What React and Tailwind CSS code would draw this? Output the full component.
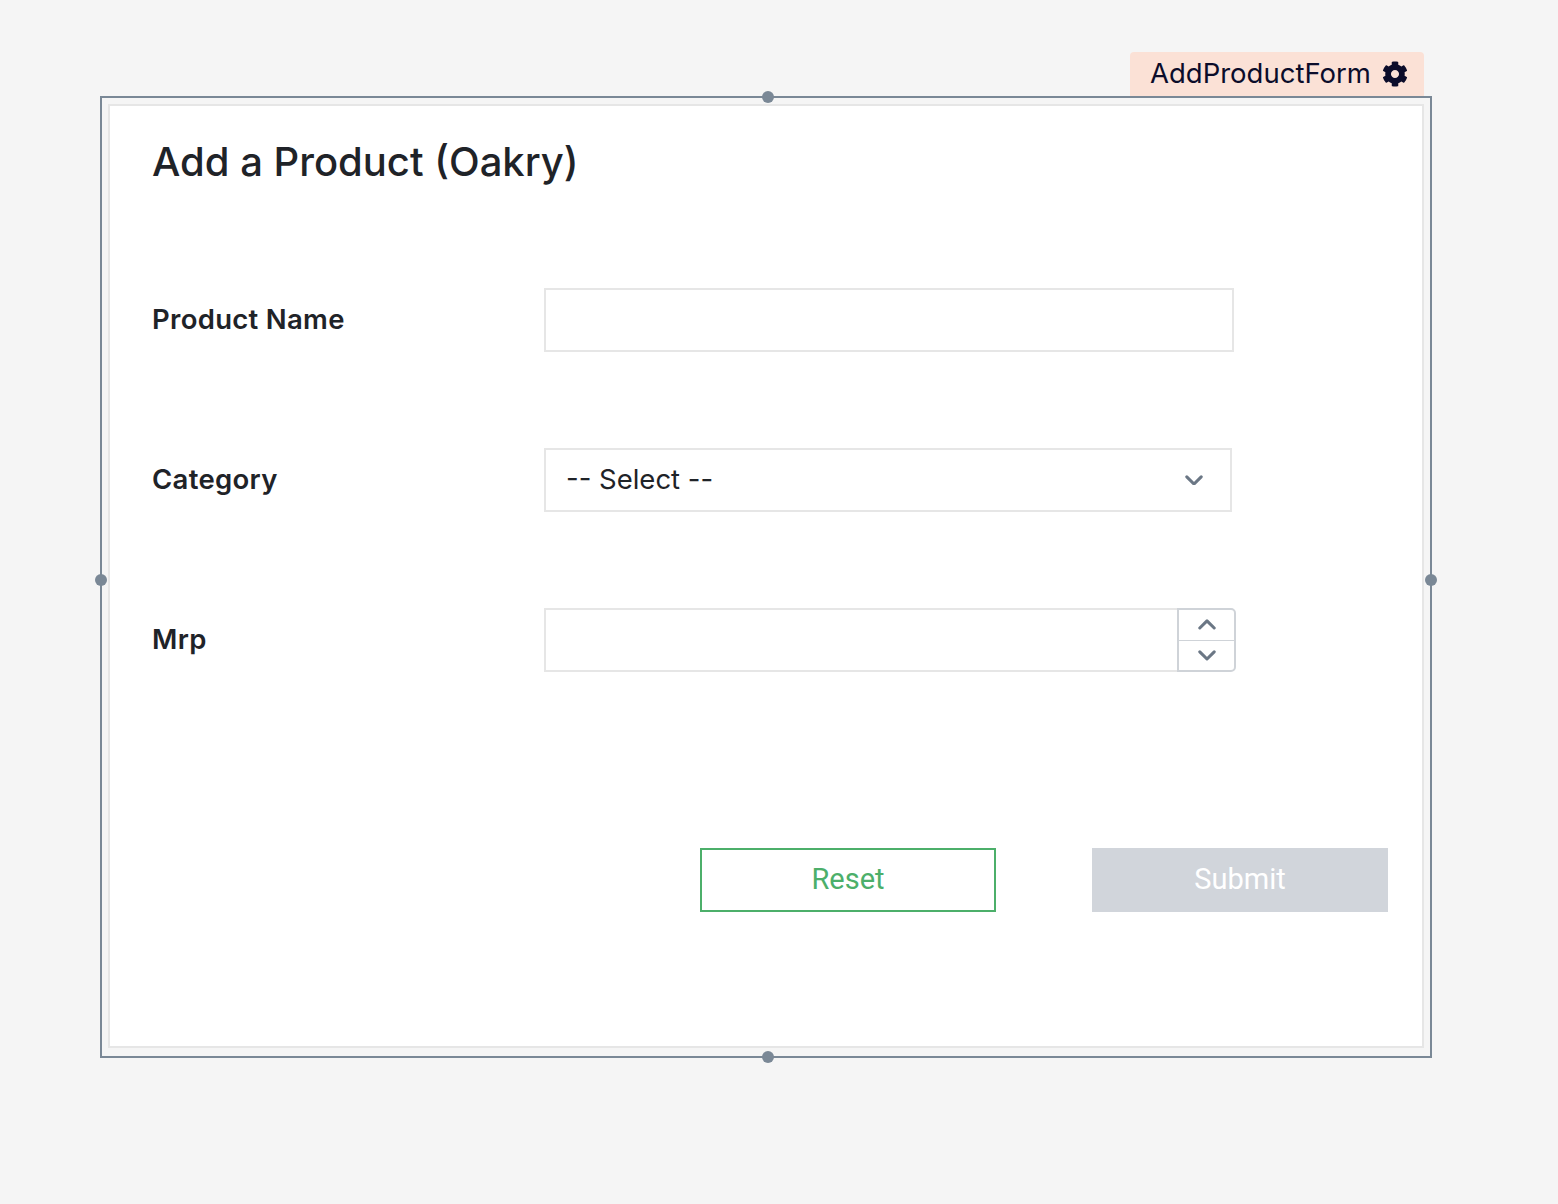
import React from "react";

function Gear() {
  return (
    <svg width="26" height="26" viewBox="0 0 512 512" fill="#0b0c2a">
      <path d="M487.4 315.7l-42.6-24.6c4.3-23.2 4.3-47 0-70.2l42.6-24.6c4.9-2.8 7.1-8.6 5.5-14-11.1-35.6-30-67.800-54.7-94.6-3.8-4.1-10-5.1-14.8-2.3L380.8 110c-17.9-15.4-38.5-27.3-60.8-35.1V25.8c0-5.6-3.9-10.5-9.4-11.7-36.7-8.2-74.3-7.8-109.2 0-5.5 1.2-9.4 6.1-9.4 11.7V75c-22.2 7.9-42.8 19.8-60.8 35.1L88.7 85.5c-4.9-2.8-11-1.9-14.8 2.3-24.7 26.7-43.6 58.9-54.7 94.6-1.7 5.4.6 11.2 5.5 14L67.3 221c-4.3 23.2-4.3 47 0 70.2l-42.6 24.6c-4.9 2.8-7.1 8.6-5.5 14 11.1 35.6 30 67.8 54.7 94.6 3.8 4.1 10 5.1 14.8 2.3l42.6-24.6c17.9 15.4 38.5 27.3 60.8 35.1v49.2c0 5.6 3.9 10.5 9.4 11.7 36.7 8.2 74.3 7.8 109.2 0 5.5-1.2 9.4-6.1 9.4-11.7v-49.2c22.2-7.9 42.8-19.8 60.8-35.1l42.6 24.6c4.9 2.8 11 1.9 14.8-2.3 24.7-26.7 43.6-58.9 54.7-94.6 1.5-5.5-.7-11.3-5.6-14.1zM256 336c-44.1 0-80-35.9-80-80s35.9-80 80-80 80 35.9 80 80-35.9 80-80 80z" />
    </svg>
  );
}

function Chevron({ up = false, w = 18 }) {
  return (
    <svg width={w} height={w * 0.6} viewBox="0 0 20 12" fill="none" stroke="#6b7785" strokeWidth="3.4" strokeLinecap="round" strokeLinejoin="round">
      {up ? <path d="M2 10 L10 2 L18 10" /> : <path d="M2 2 L10 10 L18 2" />}
    </svg>
  );
}

function Handle({ className }) {
  return <div className={"absolute w-[12px] h-[12px] rounded-full bg-[#7a8896] " + className} />;
}

export default function App() {
  return (
    <div
      className="min-h-screen bg-[#f5f5f5] pt-[96px] pl-[100px] pb-[146px]"
      style={{ fontFamily: "Inter, 'Noto Sans', sans-serif" }}
    >
      <div className="relative w-[1332px] h-[962px] border-2 border-[#7a8896] pt-[6px] pl-[6px] pr-[6px] pb-[8px]">
        <div className="absolute right-[6px] top-[-46px] h-[44px] w-[294px] bg-[#fbe1d6] rounded-t-[4px] flex items-center pl-[20px] gap-[11px] text-[27.5px] text-[#0b0c2a]">
          <span>AddProductForm</span>
          <Gear />
        </div>
        <Handle className="left-[660px] top-[-7px]" />
        <Handle className="left-[660px] bottom-[-7px]" />
        <Handle className="left-[-7px] top-[476px]" />
        <Handle className="right-[-7px] top-[476px]" />

        <div className="h-full border-2 border-[#e6e6e6] bg-white pl-[42px] pr-[34px] pt-[30px] flex flex-col">
          <h1 className="text-[40px] leading-[52px] font-medium text-[#1f2328]">
            Add a Product (Oakry)
          </h1>

          <div className="mt-[100px] flex flex-col gap-[96px]">
            <div className="flex items-center h-[64px]">
              <label className="w-[392px] text-[27.5px] font-semibold tracking-[0.3px] text-[#1f2328]">Product Name</label>
              <div className="w-[690px] h-[64px] border-2 border-[#e6e6e6] bg-white" />
            </div>

            <div className="flex items-center h-[64px]">
              <label className="w-[392px] text-[27.5px] font-semibold tracking-[0.3px] text-[#1f2328]">Category</label>
              <div className="w-[688px] h-[64px] border-2 border-[#e6e6e6] bg-white flex items-center justify-between pl-[20px] pr-[27px]">
                <span className="text-[27.5px] text-[#1f2328]">-- Select --</span>
                <Chevron />
              </div>
            </div>

            <div className="flex items-center h-[64px]">
              <label className="w-[392px] text-[27.5px] font-semibold tracking-[0.3px] text-[#1f2328]">Mrp</label>
              <div className="w-[692px] h-[64px] flex">
                <div className="flex-1 border-2 border-r-0 border-[#e6e6e6] bg-white" />
                <div className="w-[59px] h-[64px] border-2 border-[#cfd3d8] rounded-r-[5px] flex flex-col bg-white">
                  <div className="flex-1 flex items-center justify-center border-b border-[#cfd3d8]">
                    <Chevron up />
                  </div>
                  <div className="flex-1 flex items-center justify-center">
                    <Chevron />
                  </div>
                </div>
              </div>
            </div>
          </div>

          <div className="mt-[176px] flex justify-end gap-[96px]" style={{ fontFamily: "Roboto, 'Noto Sans', sans-serif" }}>
            <button className="w-[296px] h-[64px] border-2 border-[#4caf6a] text-[#4caf6a] text-[29px] bg-white">
              Reset
            </button>
            <button className="w-[296px] h-[64px] bg-[#d1d5db] text-white text-[29px]">
              Submit
            </button>
          </div>
        </div>
      </div>
    </div>
  );
}
